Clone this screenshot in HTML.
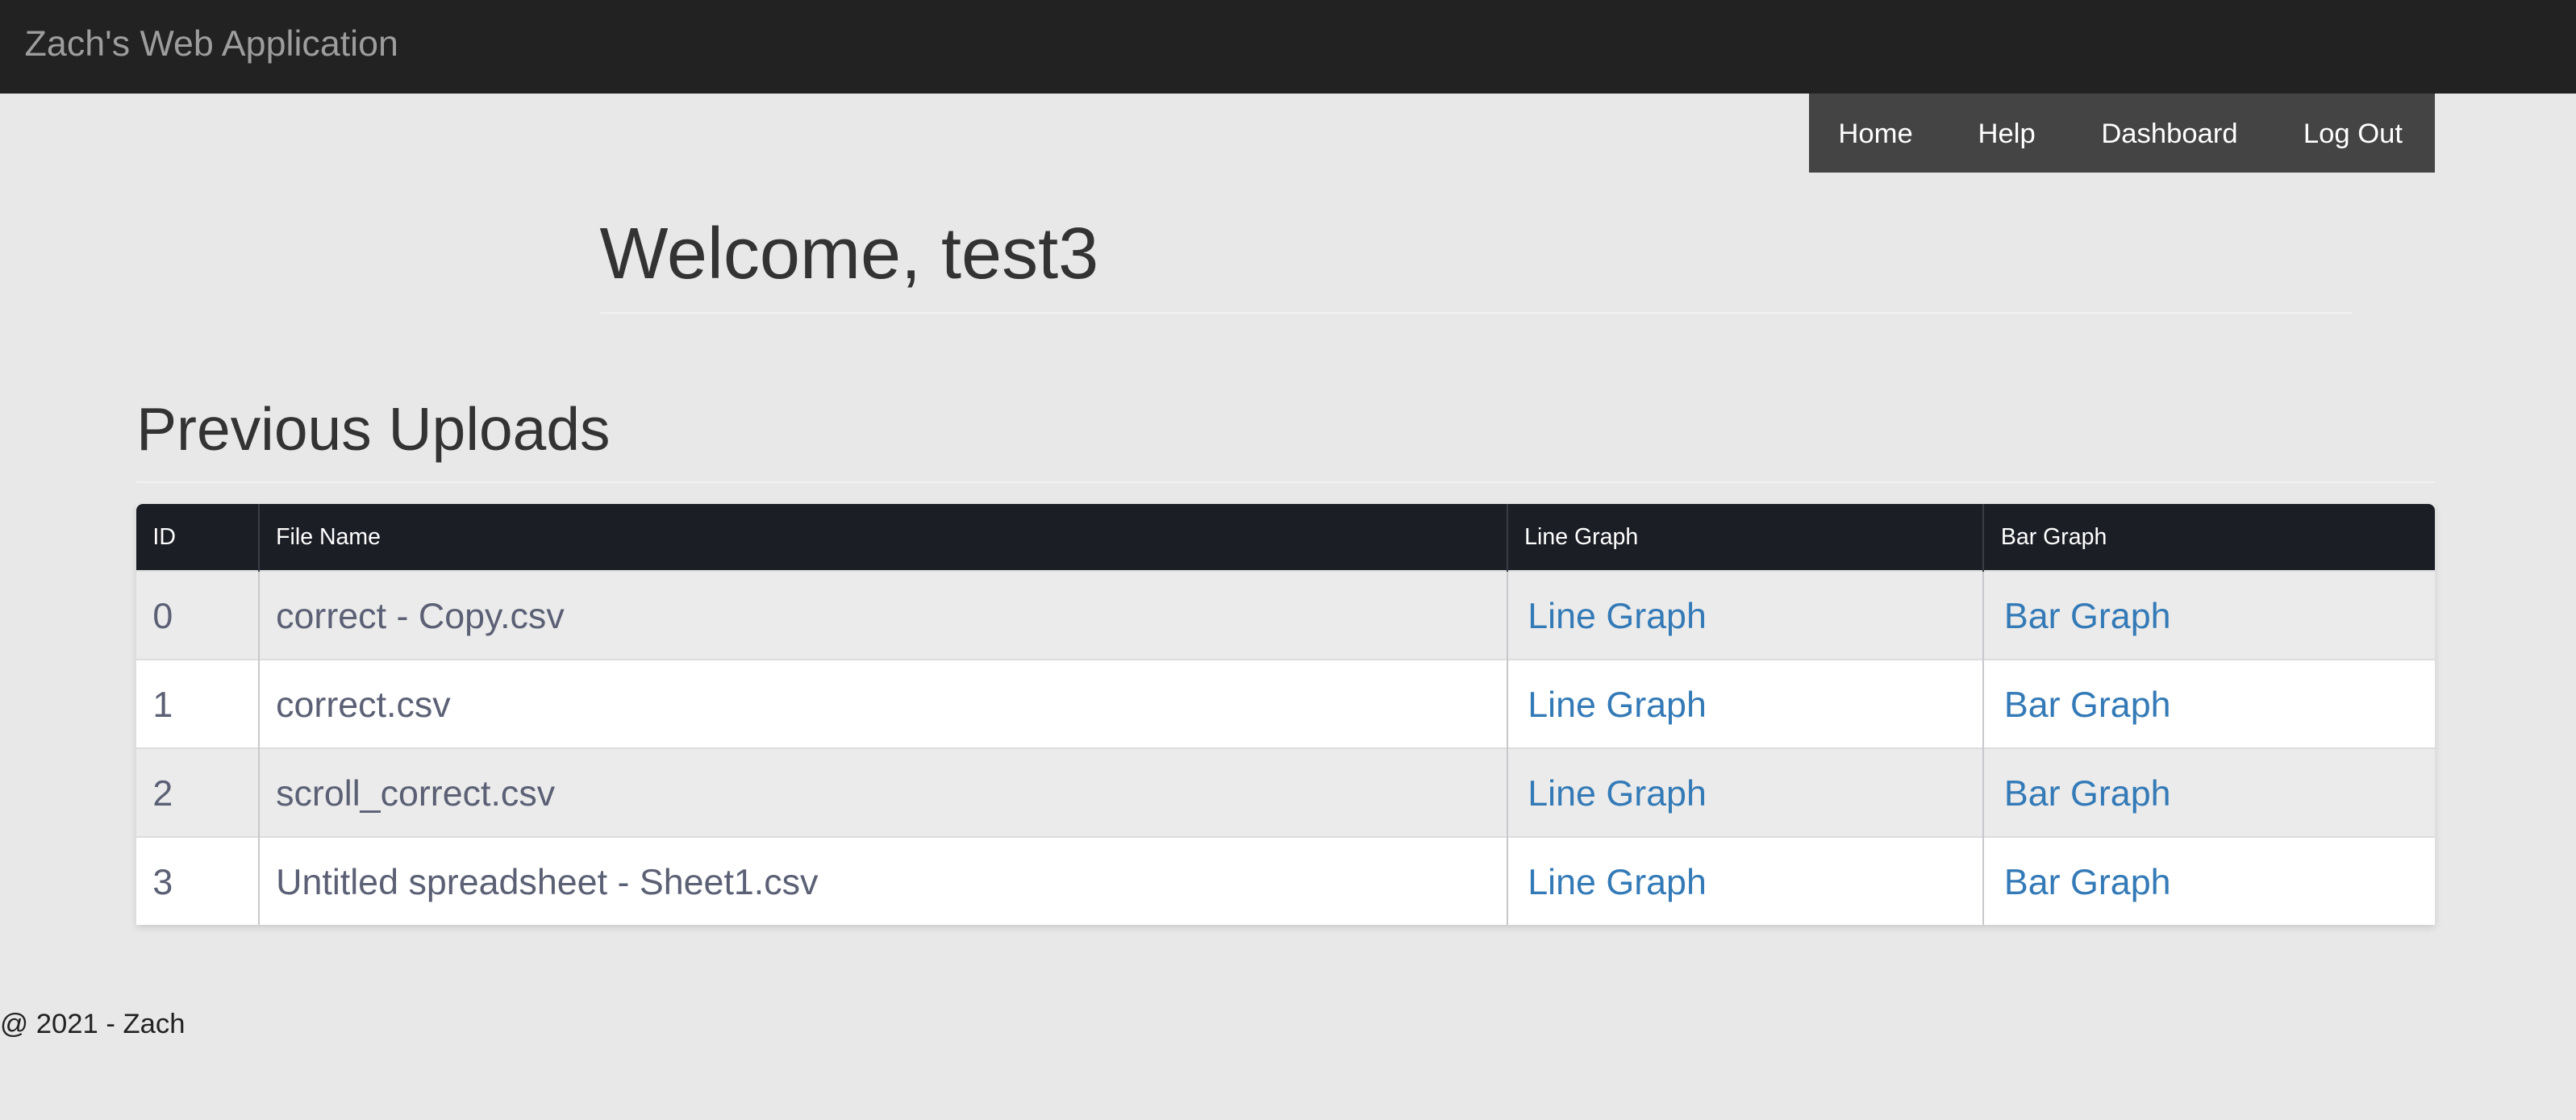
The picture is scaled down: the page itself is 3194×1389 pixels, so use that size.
<!DOCTYPE html>
<html><head><style>
html{zoom:2.037}
body{margin:0;background:#e8e8e8;font-family:"Liberation Sans",Arial,sans-serif;width:1568px;height:682px;position:relative;overflow:hidden}
.nav{position:absolute;left:0;top:0;width:1568px;height:57px;background:#222}
.brand{position:absolute;left:15px;top:14px;font-size:22px;color:#9d9d9d}
.menu{position:absolute;left:1101px;top:57px;width:381px;height:48px;background:#444}
.menu span{position:absolute;top:15px;font-size:17px;color:#fff}
h1{position:absolute;left:365px;top:129px;margin:0;font-weight:normal;font-size:44.2px;color:#333}
h2{position:absolute;left:83px;top:240px;margin:0;font-weight:normal;font-size:36.8px;color:#333}
.hr{position:absolute;height:1px;background:#f2f2f2}
table{position:absolute;left:83px;top:307px;width:1399px;border-collapse:collapse;box-shadow:0 2px 4px rgba(0,0,0,.12)}
th{background:#1c1e26;color:#fff;font-weight:normal;font-size:14px;text-align:left;height:40px;padding:0 10px;border-left:1px solid #3a3d46}
th:first-child{border-left:none;border-top-left-radius:4px}
th:last-child{border-top-right-radius:4px}
td{height:51px;padding:2px 10px 0;font-size:22px;color:#5b6075;border-left:1px solid #c8c8cc;border-top:1px solid #dcdcdc}
td:first-child{border-left:none}
tr.s td{background:#ebebeb}
tr.w td{background:#fff}
td a{color:#337ab7;text-decoration:none;padding-left:2px}
.foot{position:absolute;left:0;top:614px;font-size:17px;color:#222}
</style></head><body>
<div class="nav"><div class="brand">Zach's Web Application</div></div>
<div class="menu"><span style="left:18px">Home</span><span style="left:103px">Help</span><span style="left:178px">Dashboard</span><span style="left:301px">Log Out</span></div>
<h1>Welcome, test3</h1>
<div class="hr" style="left:365px;top:190px;width:1067px"></div>
<h2>Previous Uploads</h2>
<div class="hr" style="left:83px;top:293px;width:1399px"></div>
<table>
<tr><th style="width:54px">ID</th><th style="width:739px">File Name</th><th style="width:269px">Line Graph</th><th>Bar Graph</th></tr>
<tr class="s"><td>0</td><td>correct - Copy.csv</td><td><a>Line Graph</a></td><td><a>Bar Graph</a></td></tr>
<tr class="w"><td>1</td><td>correct.csv</td><td><a>Line Graph</a></td><td><a>Bar Graph</a></td></tr>
<tr class="s"><td>2</td><td>scroll_correct.csv</td><td><a>Line Graph</a></td><td><a>Bar Graph</a></td></tr>
<tr class="w"><td>3</td><td>Untitled spreadsheet - Sheet1.csv</td><td><a>Line Graph</a></td><td><a>Bar Graph</a></td></tr>
</table>
<div class="foot">@ 2021 - Zach</div>
</body></html>
